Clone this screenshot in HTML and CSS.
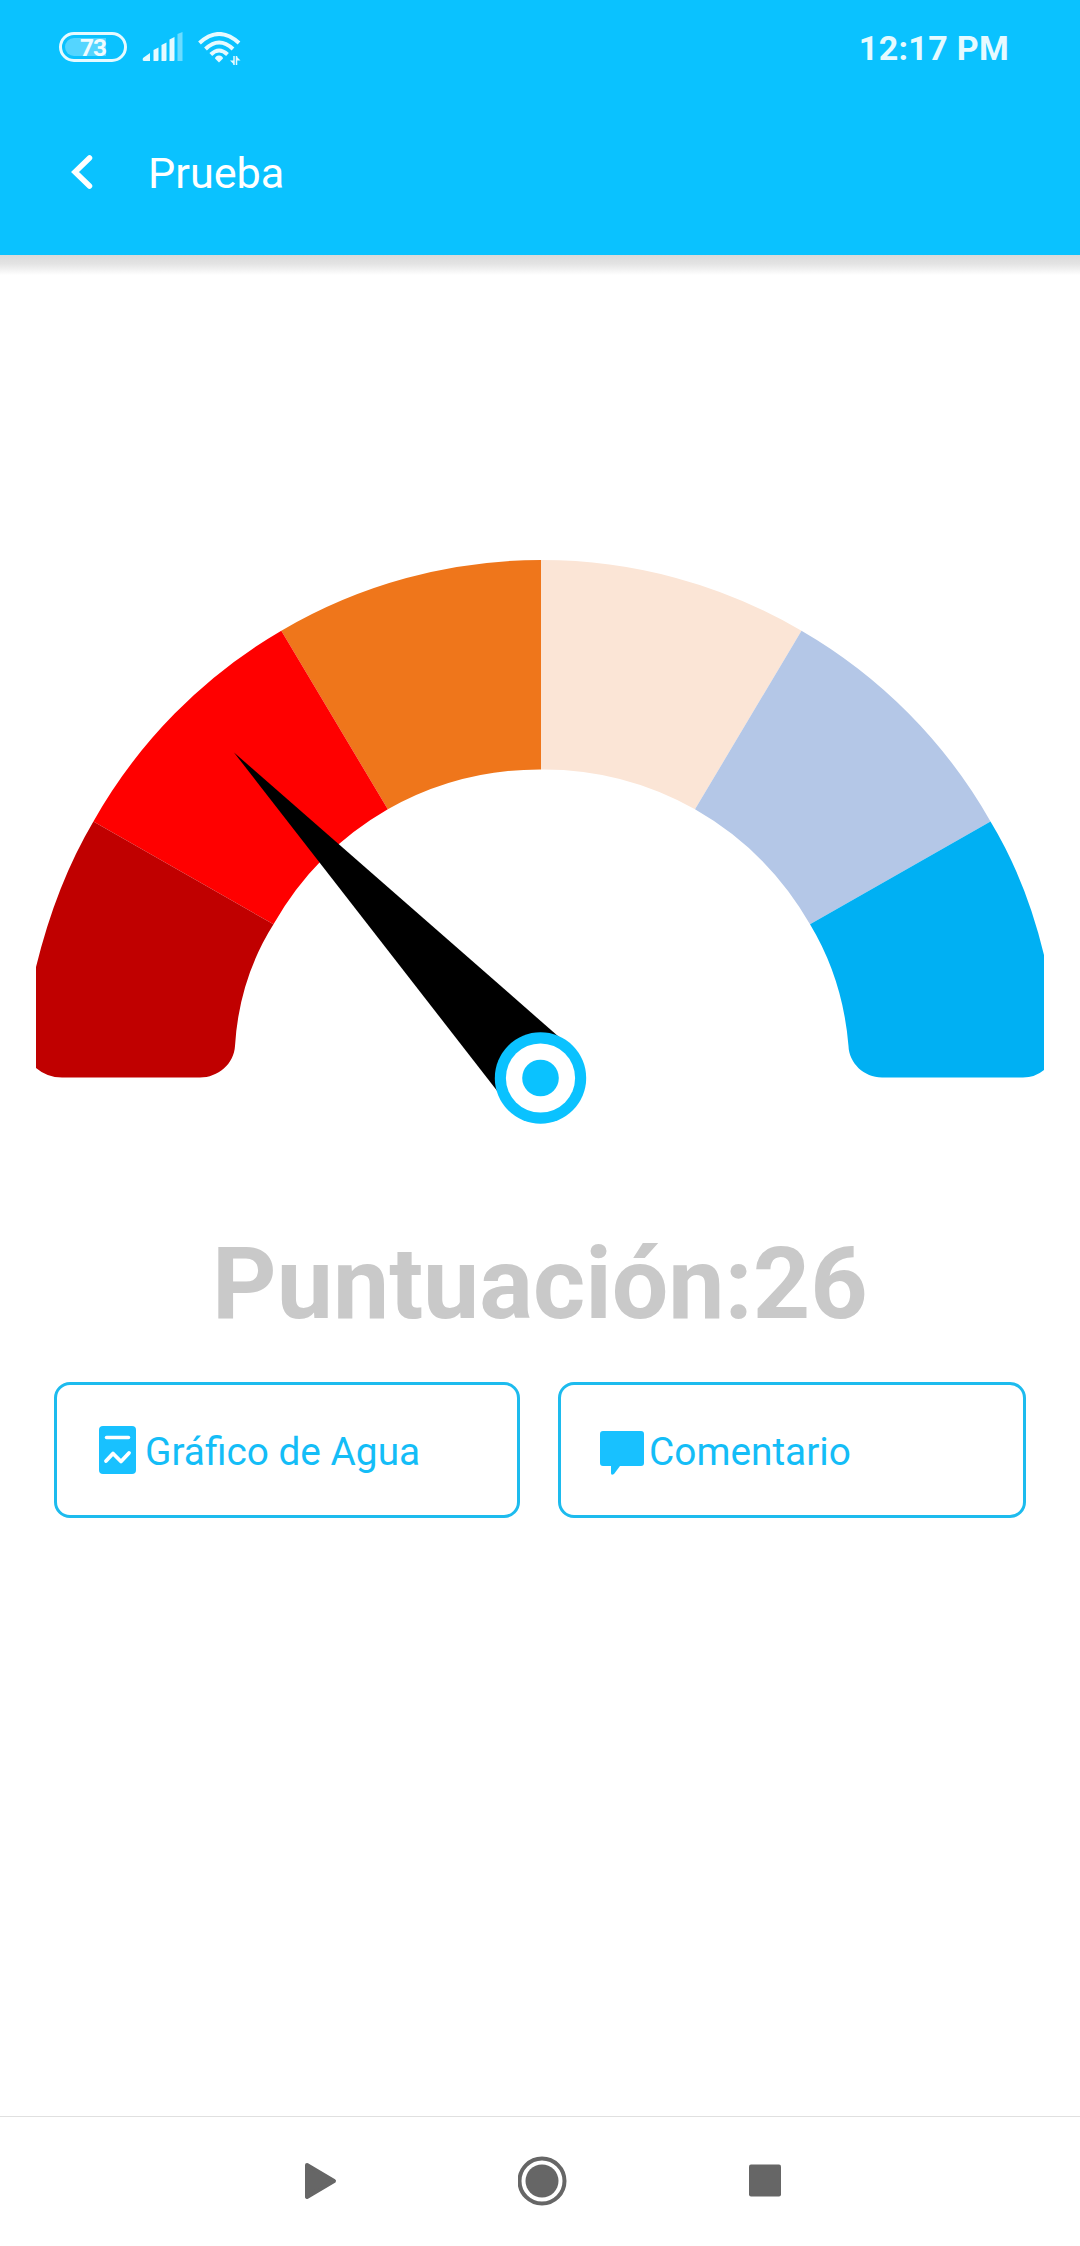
FILE: index.html
```html
<!DOCTYPE html>
<html lang="es">
<head>
    <meta charset="UTF-8">
    <meta name="viewport" content="width=device-width, initial-scale=1.0">
    <title>Prueba</title>
    <link rel="stylesheet" href="styles.css">
</head>
<body>
    <header>
        <div class="status-bar">
            <div class="status-icons">
                <div class="battery"><span>73</span></div>
                <svg class="signal" width="42" height="30" viewBox="0 0 42 30">
                    <g fill="#e6faff">
                        <path d="M1 26 L8 21 V29 H2 Q0 29 1 26 Z"/>
                        <path d="M11.500 18 L16.500 15.500 V28 Q16.500 29 15.500 29 H11.500 Z"/>
                        <path d="M19.500 13 L24.500 10.500 V28 Q24.500 29 23.500 29 H19.500 Z"/>
                        <path d="M27.500 7.500 L32.500 5 V28 Q32.500 29 31.500 29 H27.500 Z"/>
                    </g>
                    <path d="M35.500 2 L40.500 0 V29 H35.500 Z" fill="#6cdcff"/>
                </svg>
                <svg class="wifi" width="44" height="34" viewBox="0 0 44 34">
                    <g fill="none" stroke="#e6faff" stroke-width="4">
                        <path d="M1.500 11 Q21 -7 41 11"/>
                        <path d="M7.500 17 Q21 4 35 17"/>
                        <path d="M12.800 22.500 Q21 14.500 29.500 22.500"/>
                    </g>
                    <path d="M21 23.500 C23.500 23.500 25 25 25 26.500 L21 30.500 L17 26.500 C17 25 18.500 23.500 21 23.500 Z" fill="#e6faff"/>
                    <path d="M36 24 V33 M38.500 33 V24" stroke="#e6faff" stroke-width="1.500"/>
                    <path d="M32 28.500 H36 V32.500 Z M38.500 24.500 V28.500 H42.500 Z" fill="#e6faff"/>
                </svg>
            </div>
            <div class="time">12:17 PM</div>
        </div>
        <div class="title-bar">
            <svg class="back" width="24" height="38" viewBox="0 0 24 38">
                <path d="M18.500 5 L4 19 L18.500 33" fill="none" stroke="#fff" stroke-width="5.500" stroke-linecap="round"/>
            </svg>
            <h1>Prueba</h1>
        </div>
    </header>

    <main>
        <!-- Gauge -->
        <svg class="gauge" width="1008" height="570" viewBox="36 555 1008 570">
            <path d="M541 560 A513 513 0 0 0 281.300 630.700 L387.800 809.300 A309 309 0 0 1 541 769.500 Z" fill="#ef761b"/>
            <path d="M281.300 630.700 A513 513 0 0 0 93.400 821.400 L273.500 924.300 A309 309 0 0 1 387.800 809.300 Z" fill="#ff0000"/>
            <path d="M93.400 821.400 Q56.300 884 36 967 V1068 Q47 1077.500 62 1077.500 H200 C218 1077.500 234 1064 235 1046 Q239 979 273.500 924.300 Z" fill="#c00000"/>
            <path d="M541 560 A513 513 0 0 1 801.500 630.700 L695 809.300 A309 309 0 0 0 541 769.500 Z" fill="#fbe5d6"/>
            <path d="M801.500 630.700 A513 513 0 0 1 990.500 821.400 L810 924.300 A309 309 0 0 0 695 809.300 Z" fill="#b4c7e7"/>
            <path d="M990.500 821.400 Q1026 880 1044 955 V1070 Q1035 1077.500 1023 1077.500 H882 C864 1077.500 849 1063 848.500 1046 Q843 979 810 924.300 Z" fill="#00b0f3"/>
            <path d="M234 752.500 L559 1037 L541 1078 L498 1092 Z" fill="#000"/>
            <circle cx="540.500" cy="1078" r="45.700" fill="#0ac2ff"/>
            <circle cx="540.500" cy="1078" r="34.600" fill="#fff"/>
            <circle cx="540.500" cy="1078" r="18.300" fill="#0ac2ff"/>
        </svg>

        <div class="score">Puntuación:26</div>

        <div class="actions">
            <button class="chart-btn">
                <svg width="37" height="48" viewBox="0 0 37 48">
                    <rect width="37" height="48" rx="4" fill="#18c1ff"/>
                    <path d="M7.500 11.500 H29.500" stroke="#fff" stroke-width="3.500" stroke-linecap="round"/>
                    <path d="M7 35 L14 27.500 L22 35.500 L30 27" fill="none" stroke="#fff" stroke-width="3.800" stroke-linecap="round" stroke-linejoin="round"/>
                </svg>
                <span>Gráfico de Agua</span>
            </button>
            <button class="comment-btn">
                <svg width="44" height="44" viewBox="0 0 44 44">
                    <path d="M3 0 H41 Q44 0 44 3 V32 Q44 35 41 35 H20 L14 43 Q11 45 11 42 V35 H3 Q0 35 0 32 V3 Q0 0 3 0 Z" fill="#18c1ff"/>
                </svg>
                <span>Comentario</span>
            </button>
        </div>
    </main>

    <!-- Android navigation -->
    <nav>
        <svg width="32" height="50" viewBox="0 0 32 50">
            <path d="M2 9 L29 25 L2 41 Z" fill="#666" stroke="#666" stroke-width="4" stroke-linejoin="round"/>
        </svg>
        <svg width="50" height="50" viewBox="0 0 50 50">
            <circle cx="24" cy="25" r="22.500" fill="none" stroke="#666" stroke-width="4"/>
            <circle cx="24" cy="25" r="16.500" fill="#666"/>
        </svg>
        <svg width="32" height="50" viewBox="0 0 32 50">
            <rect y="8.500" width="32" height="32" rx="2" fill="#666"/>
        </svg>
    </nav>
</body>
</html>
```
FILE: styles.css
```css
/* General Styles */
* {
    box-sizing: border-box;
    margin: 0;
    padding: 0;
}

body {
    font-family: Roboto, sans-serif;
    background-color: #fff;
    min-height: 100vh;
    display: flex;
    flex-direction: column;
}

svg {
    display: block;
    flex-shrink: 0;
}

/* Header */
header {
    height: 255px;
    background-color: #0ac2ff;
}

header::after {
    content: "";
    display: block;
    height: 20px;
    background: linear-gradient(#dadada, #e4e4e4 45%, #fff);
}

.status-bar {
    height: 95px;
    padding: 0 71px 0 59px;
    display: flex;
    justify-content: space-between;
    align-items: center;
}

.status-icons {
    display: flex;
    align-items: center;
    color: #f0fcff;
    margin-top: -1px;
}

.battery {
    width: 68px;
    height: 30px;
    border: 3px solid #e6faff;
    border-radius: 15px;
    padding: 3px;
    display: flex;
}

.battery span {
    width: 41px;
    height: 18px;
    border-radius: 9px 0 0 9px;
    background-color: #54d5ff;
    font-size: 24.5px;
    font-weight: bold;
    line-height: 19px;
    text-align: right;
    letter-spacing: -1px;
}

.signal {
    margin: 0 14px 0 15px;
}

.wifi {
    margin-top: 3px;
}

.time {
    color: #e6faff;
    font-size: 34px;
    font-weight: bold;
    padding-top: 1px;
    letter-spacing: 0.3px;
}

.title-bar {
    height: 160px;
    padding: 58px 0 0 71px;
    display: flex;
    align-items: flex-start;
}

.title-bar h1 {
    color: #fff;
    font-size: 43.2px;
    font-weight: normal;
    line-height: 50px;
    margin: -4px 0 0 53px;
}

/* Content */
main {
    flex: 1;
    padding: 300px 36px 0;
}

.score {
    margin-top: 100px;
    color: #c9c9c9;
    font-size: 100.3px;
    font-weight: bold;
    line-height: 117px;
    text-align: center;
}

.actions {
    margin-top: 40px;
    padding: 0 18px;
    display: flex;
    gap: 38px;
}

.actions button {
    height: 136px;
    border: 3px solid #1dbbee;
    border-radius: 16px;
    background-color: #fff;
    color: #14bdf7;
    font-family: inherit;
    font-size: 38.8px;
    display: flex;
    align-items: center;
}

.actions span {
    padding-top: 2px;
}

.actions .chart-btn {
    width: 466px;
    padding-left: 42px;
    gap: 9px;
}

.actions .comment-btn {
    width: 468px;
    padding-left: 39px;
    gap: 5px;
}

.comment-btn svg {
    margin-top: 6px;
}

/* Bottom navigation */
nav {
    height: 130px;
    border-top: 1px solid #e0e0e0;
    padding: 0 299px 1px 305px;
    display: flex;
    justify-content: space-between;
    align-items: center;
}
```
